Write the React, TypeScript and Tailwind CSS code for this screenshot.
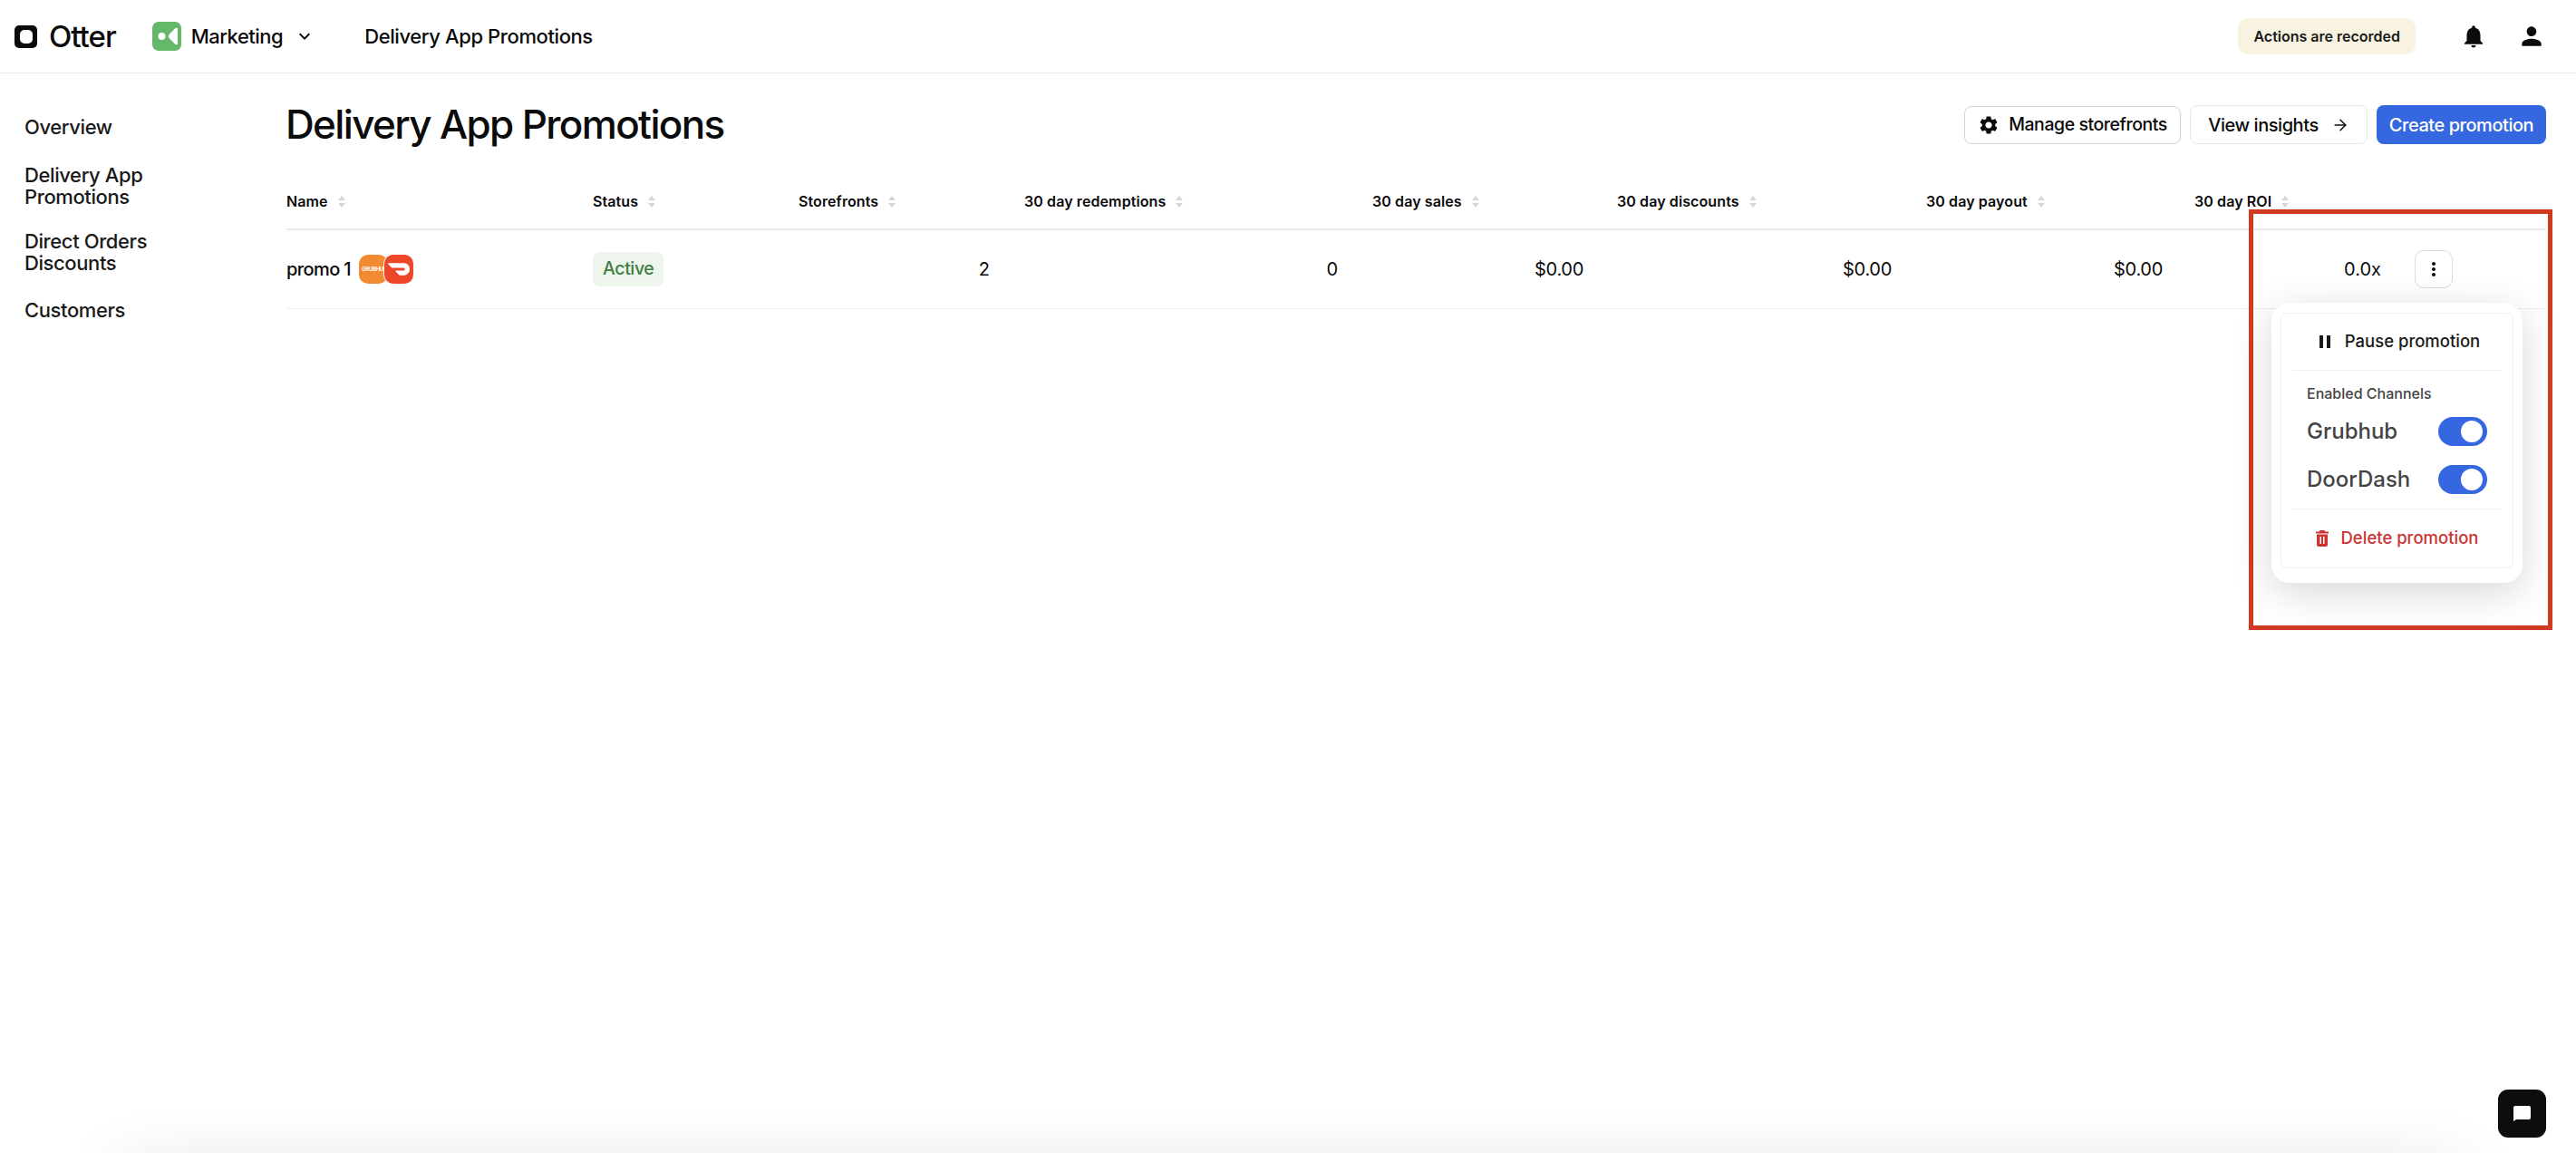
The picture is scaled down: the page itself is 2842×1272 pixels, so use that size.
import { ArrowRight } from "lucide-react";
import {
  MdKeyboardArrowDown,
  MdMoreVert,
  MdNotifications,
  MdPause,
  MdPerson,
  MdSettings,
} from "react-icons/md";
import { SiDoordash } from "react-icons/si";

const COLUMNS = "grid grid-cols-[338px_227px_249px_384px_270px_341px_296px_243px_145px]";

const HEADINGS = [
  "Name",
  "Status",
  "Storefronts",
  "30 day redemptions",
  "30 day sales",
  "30 day discounts",
  "30 day payout",
  "30 day ROI",
];

function SortIcon() {
  return (
    <svg width="8" height="13" viewBox="0 0 8 13" className="ml-[11px] shrink-0 fill-[#d6d6d6]">
      <path d="M4 0 8 5H0z" />
      <path d="M4 13 0 8h8z" />
    </svg>
  );
}

function OtterLogo() {
  return (
    <div className="flex items-center">
      <div className="flex h-[25px] w-[25px] items-center justify-center rounded-[5px] bg-[#0b0b0b]">
        <div className="h-[15px] w-[14px] rounded-[5px] bg-white" />
      </div>
      <span className="ml-[13px] text-[33px] leading-none font-medium tracking-[-1px] text-[#0b0b0b]">Otter</span>
    </div>
  );
}

function MarketingIcon() {
  return (
    <div className="flex h-[32px] w-[32px] items-center justify-center rounded-[7px] bg-[#65b76a]">
      <svg width="32" height="32" viewBox="0 0 32 32" className="fill-white">
        <circle cx="10.500" cy="16" r="4" />
        <path d="M28 7v18c-1 .5-2 .2-3-.6l-6-6c-1.400-1.400-1.400-3.400 0-4.800l6-6c1-.8 2-1.100 3-.6z" />
      </svg>
    </div>
  );
}

function TrashIcon() {
  return (
    <svg width="14" height="18" viewBox="0 0 14 18" className="shrink-0 fill-[#cc3333]">
      <path d="M4.500 0h5l1 1.500H14v2H0v-2h3.500z" />
      <path
        fillRule="evenodd"
        d="M1 4.500h12V16a2 2 0 0 1-2 2H3a2 2 0 0 1-2-2zM4.500 7v8h1.500V7zM8 7v8h1.500V7z"
      />
    </svg>
  );
}

function Toggle() {
  return (
    <div className="flex h-[32px] w-[54px] items-center justify-end rounded-full bg-[#3567e0] pr-[5px]">
      <div className="h-[24px] w-[24px] rounded-full bg-white" />
    </div>
  );
}

function ChannelLogos() {
  return (
    <div className="ml-[9px] flex items-center">
      <div className="flex h-[32px] w-[32px] items-center overflow-hidden rounded-[10px] bg-[#f28a33] pl-[3px]">
        <span className="text-[6px] leading-none font-bold tracking-[-0.3px] text-white">GRUBHU</span>
      </div>
      <div className="z-10 -ml-[5px] flex h-[34px] w-[34px] items-center justify-center rounded-[11px] border border-white bg-[#ee4628] text-white">
        <SiDoordash size={24} />
      </div>
    </div>
  );
}

function ActionsMenu() {
  return (
    <div className="absolute top-[58px] left-[-158px] z-20 w-[277px] rounded-[20px] bg-white px-[10px] pt-[11px] pb-[16px] shadow-[0_10px_44px_rgba(0,0,0,0.16)]">
      <div className="rounded-[6px] border border-[#f0f0f0] px-[12px]">
        <div className="flex h-[63px] items-center justify-center gap-[10px] border-b border-[#eeeeee] text-[18.500px] font-medium text-[#1a1a1a]">
          <MdPause size={24} className="text-[#1a1a1a]" />
          <span>Pause promotion</span>
        </div>
        <div className="border-b border-[#eeeeee] px-[16px] pt-[14px] pb-[1px]">
          <div className="text-[16px] leading-[22px] font-medium text-[#444444]">Enabled Channels</div>
          <div className="mt-[15px] flex h-[32px] items-center justify-between text-[24px] font-medium text-[#444444]">
            <span>Grubhub</span>
            <Toggle />
          </div>
          <div className="mt-[21px] mb-[15px] flex h-[32px] items-center justify-between text-[24px] font-medium text-[#444444]">
            <span>DoorDash</span>
            <Toggle />
          </div>
        </div>
        <div className="flex h-[64px] items-center justify-center gap-[14px] text-[18.500px] font-medium text-[#cc3333]">
          <TrashIcon />
          <span>Delete promotion</span>
        </div>
      </div>
    </div>
  );
}

export default function App() {
  return (
    <div className="relative flex h-[1272px] w-[2842px] flex-col overflow-hidden bg-white font-['Inter',sans-serif] text-[#0b0b0b]">
      <header className="flex h-[81px] shrink-0 items-center border-b border-[#ececec] pr-[33px] pl-[16px]">
        <OtterLogo />
        <div className="ml-[40px] flex items-center">
          <MarketingIcon />
          <span className="ml-[11px] text-[22px] font-medium tracking-[-0.5px]">Marketing</span>
          <MdKeyboardArrowDown size={24} className="ml-[12px]" />
        </div>
        <div className="ml-[54px] text-[22px] font-medium tracking-[-0.4px]">Delivery App Promotions</div>
        <div className="ml-auto flex h-[40px] items-center rounded-[12px] bg-[#f8f3e0] px-[17px] text-[16px] font-semibold text-[#1a1a1a]">
          Actions are recorded
        </div>
        <MdNotifications size={30} className="ml-[49px]" />
        <MdPerson size={32} className="ml-[33px]" />
      </header>

      <div className="flex flex-1">
        <nav className="w-[316px] shrink-0 pt-[47px] pl-[27px]">
          <ul className="w-[180px] text-[22px] leading-[24px] font-medium tracking-[-0.4px] text-[#1a1a1a]">
            <li>Overview</li>
            <li className="mt-[29px]">Delivery App Promotions</li>
            <li className="mt-[25px]">Direct Orders Discounts</li>
            <li className="mt-[28px]">Customers</li>
          </ul>
        </nav>

        <main className="flex-1 pr-[33px]">
          <div className="mt-[35px] flex h-[43px] items-center justify-between">
            <h1 className="-ml-[1px] pb-[2px] text-[44px] font-medium tracking-[-1.650px]">Delivery App Promotions</h1>
            <div className="flex items-center gap-[10px] text-[20px] font-medium tracking-[-0.450px]">
              <button className="flex h-[42px] w-[239px] items-center justify-center gap-[10px] rounded-[8px] border border-[#d4d4d4] text-[19.500px]">
                <MdSettings size={24} />
                Manage storefronts
              </button>
              <button className="flex h-[43px] w-[196px] items-center justify-center gap-[14px] rounded-[8px] border border-[#e8e8e8]">
                View insights
                <ArrowRight size={20} strokeWidth={1.75} />
              </button>
              <button className="h-[43px] w-[187px] rounded-[8px] bg-[#3567e0] text-white">Create promotion</button>
            </div>
          </div>

          <div className={`${COLUMNS} mt-[49px] border-b-2 border-[#ebebeb] pb-[16px] text-[16px] leading-[28px] font-semibold tracking-[0.1px]`}>
            {HEADINGS.map((h) => (
              <div key={h} className="flex items-center">
                {h}
                <SortIcon />
              </div>
            ))}
          </div>

          <div className={`${COLUMNS} h-[87px] items-center border-b border-[#ededed] text-[20px] font-medium`}>
            <div className="flex items-center tracking-[-0.6px]">
              promo 1
              <ChannelLogos />
            </div>
            <div>
              <span className="inline-block rounded-[8px] bg-[#edf5ec] px-[11px] py-[4px] text-[19.500px] tracking-[-0.4px] text-[#3f7d45]">
                Active
              </span>
            </div>
            <div className="pr-[38px] text-right font-normal">2</div>
            <div className="pr-[38px] text-right font-normal">0</div>
            <div className="pr-[37px] text-right font-normal tracking-[-0.3px]">$0.00</div>
            <div className="pr-[38px] text-right font-normal tracking-[-0.3px]">$0.00</div>
            <div className="pr-[35px] text-right font-normal tracking-[-0.3px]">$0.00</div>
            <div className="pr-[37px] text-right font-normal">0.0x</div>
            <div className="relative">
              <button className="flex h-[42px] w-[42px] items-center justify-center rounded-[10px] border border-[#dcdcdc]">
                <MdMoreVert size={24} />
              </button>
              <ActionsMenu />
            </div>
          </div>
        </main>
      </div>

      <button className="absolute top-[1202px] left-[2756px] z-10 flex h-[53px] w-[53px] items-center justify-center rounded-[11px] bg-[#0d0d0d]">
        <svg width="19" height="17" viewBox="0 0 19 17" className="fill-white">
          <path d="M2 0h15a2 2 0 0 1 2 2v11a2 2 0 0 1-2 2H3l-3 2V2a2 2 0 0 1 2-2z" />
        </svg>
      </button>

      <div className="absolute top-[1290px] left-[130px] h-[40px] w-[2590px] rounded-[20px] bg-white shadow-[0_0_70px_rgba(0,0,0,0.16)]" />

      <div className="pointer-events-none absolute top-[231px] left-[2481px] z-30 h-[464px] w-[335px] border-[5px] border-[#cf3a20]" />
    </div>
  );
}
